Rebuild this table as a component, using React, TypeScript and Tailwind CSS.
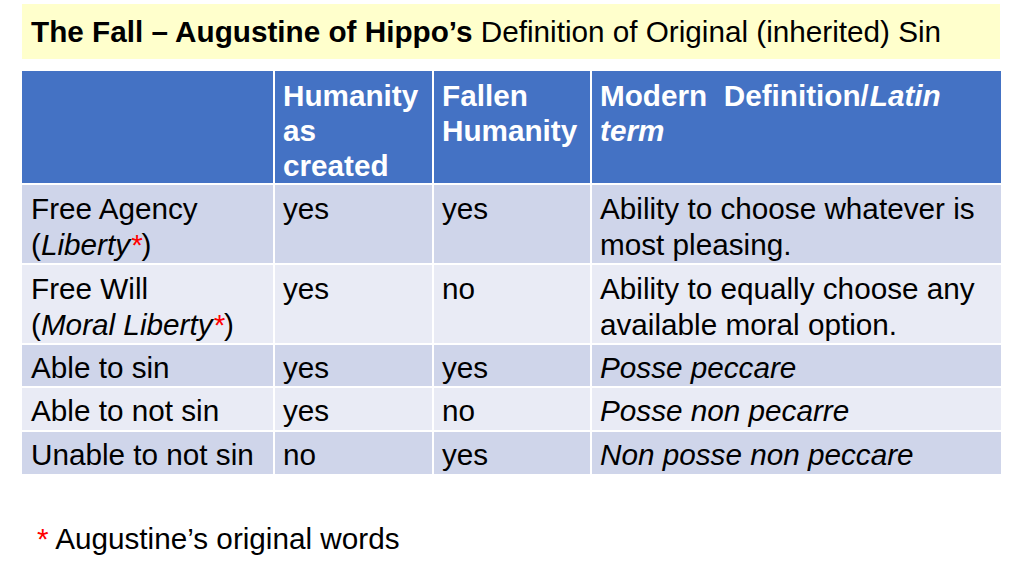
const rows = [
  {
    term: (
      <>
        Free Agency
        <br />(<i>Liberty</i>
        <i className="text-[#ff0000]">*</i>)
      </>
    ),
    created: "yes",
    fallen: "yes",
    modern: <>Ability to choose whatever is most pleasing.</>,
    tall: true,
    shade: "bg-[#cfd5ea]",
  },
  {
    term: (
      <>
        Free Will
        <br />(<i>Moral Liberty</i>
        <i className="text-[#ff0000]">*</i>)
      </>
    ),
    created: "yes",
    fallen: "no",
    modern: <>Ability to equally choose any available moral option.</>,
    tall: true,
    shade: "bg-[#e9ebf5]",
  },
  {
    term: <>Able to sin</>,
    created: "yes",
    fallen: "yes",
    modern: <i>Posse peccare</i>,
    tall: false,
    shade: "bg-[#cfd5ea]",
  },
  {
    term: <>Able to not sin</>,
    created: "yes",
    fallen: "no",
    modern: <i>Posse non pecarre</i>,
    tall: false,
    shade: "bg-[#e9ebf5]",
  },
  {
    term: <>Unable to not sin</>,
    created: "no",
    fallen: "yes",
    modern: <i>Non posse non peccare</i>,
    tall: false,
    shade: "bg-[#cfd5ea]",
  },
];

export default function App() {
  return (
    <div className="h-[576px] w-[1024px] overflow-hidden bg-white font-['Liberation_Sans',Arial,sans-serif] text-black">
      <div className="ml-[22px] mt-[4px] flex h-[55px] w-[978px] items-center bg-[#ffffcc] pl-[9px] text-[29.7px] leading-none">
        <span className="font-bold">The Fall – Augustine of Hippo’s</span>
        <span className="whitespace-pre"> Definition of Original (inherited) Sin</span>
      </div>

      <div className="ml-[22px] mt-[12px] grid w-[979px] grid-cols-[251px_157px_156px_409px] gap-[2px] text-[29.7px] leading-[36px]">
        <div className="h-[112px] bg-[#4472c4]" />
        <div className="h-[112px] bg-[#4472c4] pl-[8px] pt-[7px] font-bold leading-[35px] text-white">
          Humanity
          <br />
          as
          <br />
          created
        </div>
        <div className="h-[112px] bg-[#4472c4] pl-[8px] pt-[7px] font-bold leading-[35px] text-white">
          Fallen
          <br />
          Humanity
        </div>
        <div className="h-[112px] bg-[#4472c4] pl-[8px] pr-[6px] pt-[7px] font-bold leading-[35px] text-white">
          <span className="whitespace-pre">Modern  Definition/</span>
          <i className="pl-[1px]">Latin</i>
          <br />
          <i>term</i>
        </div>

        {rows.map((r, i) => {
          const h = r.tall ? "h-[78px] pt-[6px]" : i === 2 ? "h-[41px] pt-[5px]" : "h-[42px] pt-[5px]";
          return [
            <div key={`a${i}`} className={`${r.shade} ${h} pl-[9px]`}>
              {r.term}
            </div>,
            <div key={`b${i}`} className={`${r.shade} ${h} pl-[8px]`}>
              {r.created}
            </div>,
            <div key={`c${i}`} className={`${r.shade} ${h} pl-[8px]`}>
              {r.fallen}
            </div>,
            <div key={`d${i}`} className={`${r.shade} ${h} pl-[8px] pr-[6px]`}>
              {r.modern}
            </div>,
          ];
        })}
      </div>

      <div className="ml-[37px] mt-[50px] flex items-baseline text-[29.7px] leading-none">
        <span className="text-[#ff0000]">*</span>
        <span className="whitespace-pre"> Augustine’s original words</span>
      </div>
    </div>
  );
}
